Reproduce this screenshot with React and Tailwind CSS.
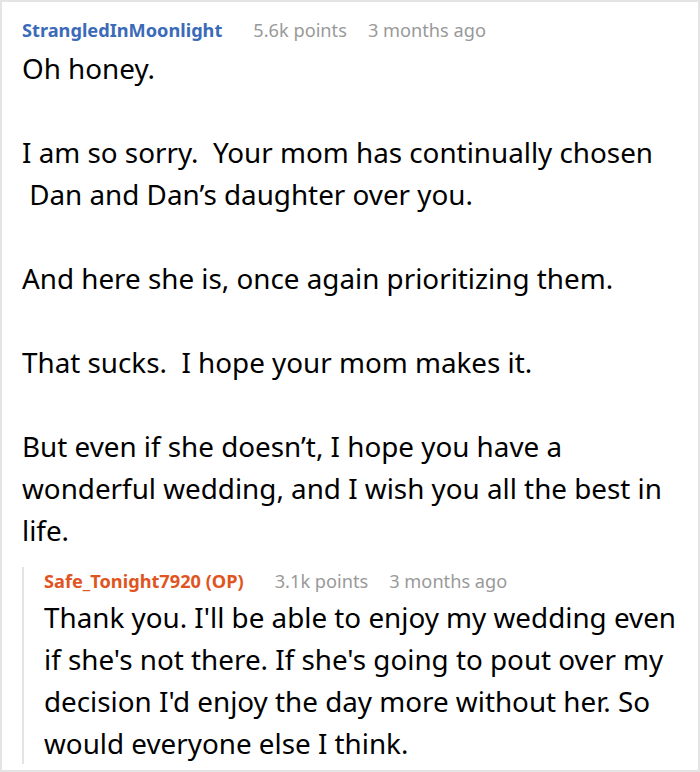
const mainLines = [
    "Oh honey.",
    "",
    "I am so sorry.\u00a0 Your mom has continually chosen",
    "\u00a0Dan and Dan\u2019s daughter over you.",
    "",
    "And here she is, once again prioritizing them.",
    "",
    "That sucks.\u00a0 I hope your mom makes it.",
    "",
    "But even if she doesn\u2019t, I hope you have a",
    "wonderful wedding, and I wish you all the best in",
    "life.",
];

const replyLines = [
    "Thank you. I'll be able to enjoy my wedding even",
    "if she's not there. If she's going to pout over my",
    "decision I'd enjoy the day more without her. So",
    "would everyone else I think.",
];

function CommentHeader({ name, nameColor, points, time }) {
    return (
        <div className="flex items-center h-[28px] text-[18.2px] leading-[28px]">
            <span className={`font-bold ${nameColor}`}>{name}</span>
            <span className="ml-[31px] text-[#999999]">{points}</span>
            <span className="ml-[21px] text-[#999999]">{time}</span>
        </div>
    );
}

function App() {
    return (
        <div
            className="w-[700px] h-[772px] bg-white border-2 border-[#e4e4e4] overflow-hidden text-black"
            style={{ fontFamily: "'Noto Sans', sans-serif" }}>
            <div className="pl-[20px] pt-[14px]">
                <CommentHeader
                    name="StrangledInMoonlight"
                    nameColor="text-[#3a6ab8]"
                    points="5.6k points"
                    time="3 months ago"
                />
                <div className="mt-[3px] text-[27.8px] leading-[42px]">
                    {mainLines.map((line, i) => (
                        <div key={i} className="h-[42px] whitespace-pre">
                            {line}
                        </div>
                    ))}
                </div>

                <div className="mt-[16px] border-l-2 border-[#e4e4e4] pl-[20px]">
                    <CommentHeader
                        name="Safe_Tonight7920 (OP)"
                        nameColor="text-[#e0551f]"
                        points="3.1k points"
                        time="3 months ago"
                    />
                    <div className="mt-[1px] text-[27.8px] leading-[42px]">
                        {replyLines.map((line, i) => (
                            <div key={i} className="h-[42px] whitespace-pre">
                                {line}
                            </div>
                        ))}
                    </div>
                </div>
            </div>
        </div>
    );
}

export default App;
